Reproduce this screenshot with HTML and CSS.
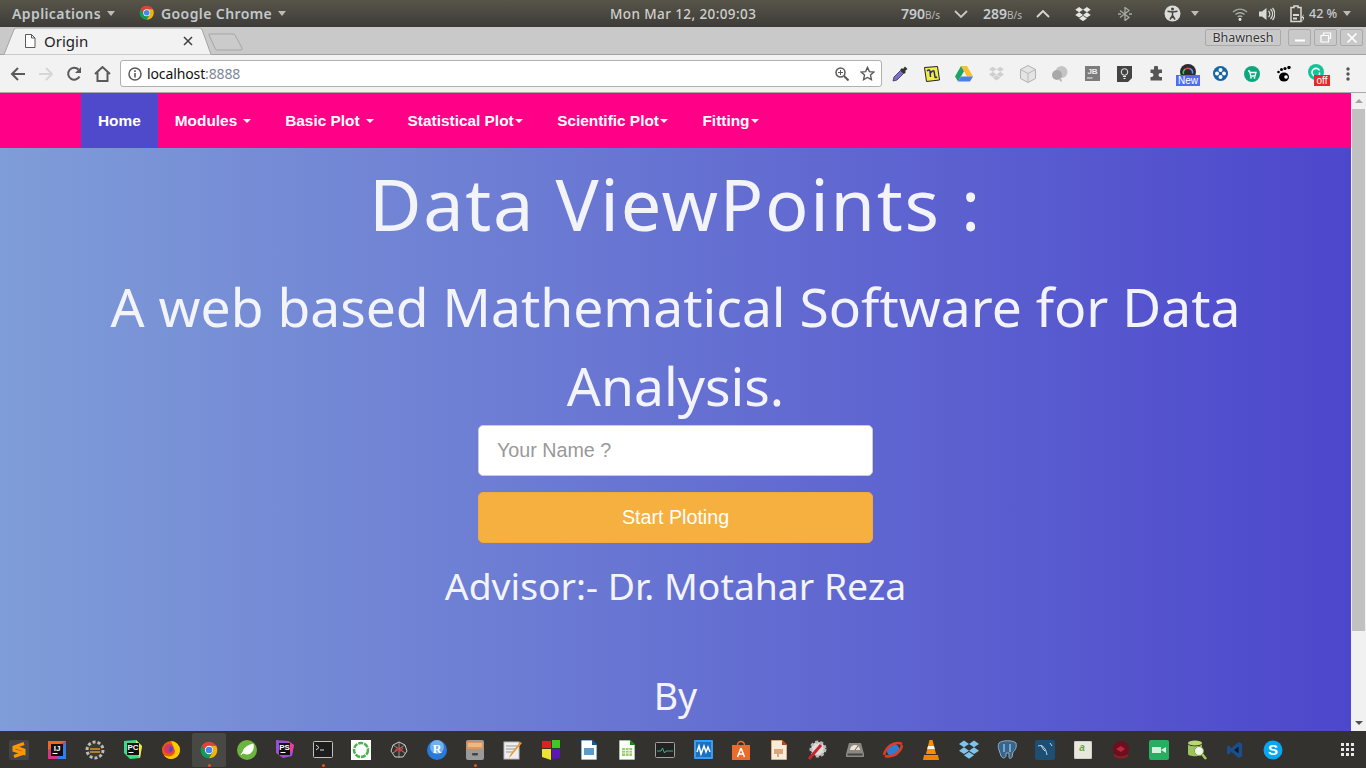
FILE: index.html
```html
<!DOCTYPE html>
<html lang="en">
<head>
<meta charset="utf-8">
<title>Origin</title>
<link rel="stylesheet" href="styles.css">
</head>
<body>
<svg class="defs" width="0" height="0" aria-hidden="true"><defs>
<symbol id="chrome" viewBox="0 0 24 24"><path fill="#db4437" d="M3.34 7A10 10 0 0 1 20.66 7H12A5 5 0 0 0 7.67 14.5Z"/><path fill="#0f9d58" d="M3.34 7L7.67 14.5A5 5 0 0 0 16.33 14.5L12 22A10 10 0 0 1 3.34 7Z"/><path fill="#f4b400" d="M12 22L16.33 14.5A5 5 0 0 0 12 7H20.66A10 10 0 0 1 12 22Z"/><circle cx="12" cy="12" r="5" fill="#fff"/><circle cx="12" cy="12" r="4" fill="#4285f4"/></symbol>
<symbol id="dropbox" viewBox="2 3 20 18"><path d="M7 3l5 3.400-5 3.400L2 6.400zM17 3l5 3.400-5 3.400-5-3.400zM2 13.200l5-3.400 5 3.400-5 3.400zM22 13.200l-5-3.400-5 3.400 5 3.400zM7 17.800l5-3.400 5 3.400-5 3.400z"/></symbol>
</defs></svg>
<div class="screen">
  <header class="panel">
    <div class="panel-left">
      <span class="panel-text apps">Applications</span><span class="caret"></span>
      <svg class="panel-chrome" width="17" height="17" viewBox="1 1 22 22"><use href="#chrome"/></svg>
      <span class="panel-text">Google Chrome</span><span class="caret"></span>
    </div>
    <div class="panel-clock">Mon Mar 12, 20:09:03</div>
    <div class="panel-right">
      <span class="net"><b>790</b><small>B/s</small></span>
      <svg class="chev1" width="14" height="8" viewBox="0 0 14 8"><path d="M1 1l6 6 6-6" fill="none" stroke="#c8c8c4" stroke-width="1.800"/></svg>
      <span class="net net2"><b>289</b><small>B/s</small></span>
      <svg class="chev2" width="14" height="8" viewBox="0 0 14 8"><path d="M1 7l6-6 6 6" fill="none" stroke="#d8d8d4" stroke-width="1.800"/></svg>
      <svg class="tray-drop" width="16" height="14" fill="#e6e6e2"><use href="#dropbox"/></svg>
      <svg class="tray-bt" width="16" height="14" viewBox="0 0 16 14"><path d="M3 3.500l9 7-4 3V.500l4 3-9 7M1 7h3M12 7h3" fill="none" stroke="#a8a8a2" stroke-width="1.300"/></svg>
      <svg class="tray-acc" width="17" height="17" viewBox="0 0 17 17"><circle cx="8.500" cy="8.500" r="8" fill="#dcdcd8"/><circle cx="8.500" cy="4" r="1.500" fill="#45433f"/><path d="M3.500 6.200l5 .8 5-.8M8.500 7v3.500M8.500 10.500l-2.500 4M8.500 10.500l2.500 4" stroke="#45433f" stroke-width="1.500" fill="none"/></svg>
      <span class="caret caret-acc"></span>
      <svg class="tray-wifi" width="16" height="14" viewBox="0 0 16 14"><path d="M1 5a10 10 0 0 1 14 0M3.500 7.500a6.500 6.500 0 0 1 9 0M5.800 10a3 3 0 0 1 4.400 0" fill="none" stroke="#a9a9a5" stroke-width="1.400"/><circle cx="8" cy="12.500" r="1.400" fill="#eee"/></svg>
      <svg class="tray-vol" width="16" height="14" viewBox="0 0 16 14"><path d="M0 4.500h3L7.500 1v12L3 9.500H0z" fill="#d8d8d4"/><path d="M9.500 4a4 4 0 0 1 0 6M11.500 2a7 7 0 0 1 0 10M13.500 1a9 9 0 0 1 0 12" fill="none" stroke="#d8d8d4" stroke-width="1.200"/></svg>
      <svg class="tray-bat" width="14" height="18" viewBox="0 0 14 18"><path d="M4 2.500V1h4v1.500h3v14H1v-14z" fill="none" stroke="#d8d8d4" stroke-width="1.500"/><path d="M3 9h6v2H3zM3 12.500h4v2H3z" fill="#d8d8d4"/><path d="M14 9l-3 4h2l-1 4 3-5h-2z" fill="#d8d8d4"/></svg>
      <span class="pct">42 %</span><span class="caret caret-pct"></span>
    </div>
  </header>

  <div class="tabstrip">
    <div class="tab">
      <svg class="tab-shape" width="210" height="28" viewBox="0 0 210 28"><path d="M0 27.500h3L13 2.500Q14 1 16 1h182q2 0 3 1.500L210 27.500" fill="#f2f2f2" stroke="#a3a3a3"/></svg>
      <svg class="tab-doc" width="12" height="14" viewBox="0 0 12 14"><path d="M1.500.500h6l3.500 3.500v9.500h-9.500zM7.500.500v3.500H11" fill="#fff" stroke="#5a5a5a"/></svg>
      <span class="tab-title">Origin</span>
      <svg class="tab-close" width="10" height="10" viewBox="0 0 10 10"><path d="M1 1l8 8M9 1l-8 8" stroke="#444" stroke-width="1.600"/></svg>
    </div>
    <svg class="newtab" width="36" height="18" viewBox="0 0 36 18"><path d="M1 1h24q1.500 0 2 1l7 13q.5 2-1 2H9q-1 0-1.500-1L1 2z" fill="#cbcbcb" stroke="#a5a5a5"/></svg>
    <div class="winbtns">
      <span class="user">Bhawnesh</span>
      <span class="winbtn"><svg width="12" height="12" viewBox="0 0 12 12"><path d="M1 8.500h10" stroke="#fff" stroke-width="2"/></svg></span>
      <span class="winbtn"><svg width="12" height="12" viewBox="0 0 12 12"><path d="M3.500 3V1h7v5.500h-2M1 3.500h7.500V10H1z" fill="none" stroke="#fff" stroke-width="1.200"/></svg></span>
      <span class="winbtn"><svg width="12" height="12" viewBox="0 0 12 12"><path d="M1.500 1.500l9 9M10.500 1.500l-9 9" stroke="#fff" stroke-width="1.600"/></svg></span>
    </div>
  </div>

  <div class="toolbar">
    <span class="navbtn"><svg width="16" height="16" viewBox="0 0 16 16"><path d="M15 8H2M8 2L2 8l6 6" fill="none" stroke="#5a5a5a" stroke-width="2"/></svg></span>
    <span class="navbtn"><svg width="16" height="16" viewBox="0 0 16 16"><path d="M1 8h13M8 2l6 6-6 6" fill="none" stroke="#d6d6d6" stroke-width="2"/></svg></span>
    <span class="navbtn"><svg width="16" height="16" viewBox="0 0 16 16"><path d="M13.500 10.500A6 6 0 1 1 12.500 3.500" fill="none" stroke="#5a5a5a" stroke-width="2"/><path d="M15 1v6H9z" fill="#5a5a5a"/></svg></span>
    <span class="navbtn"><svg width="17" height="16" viewBox="0 0 17 16"><path d="M1 8l7.500-7L16 8M3.500 6.500V15h10V6.500" fill="none" stroke="#5a5a5a" stroke-width="2"/></svg></span>
    <div class="omnibox">
      <svg class="info" width="14" height="14" viewBox="0 0 14 14"><circle cx="7" cy="7" r="6" fill="none" stroke="#5a5a5a" stroke-width="1.500"/><path d="M7 6v4.500M7 3.200v1.800" stroke="#5a5a5a" stroke-width="1.600"/></svg>
      <span class="url">localhost<span class="port">:8888</span></span>
      <svg class="zoomi" width="14" height="14" viewBox="0 0 14 14"><circle cx="5.500" cy="5.500" r="4.500" fill="none" stroke="#5a5a5a" stroke-width="1.500"/><path d="M9 9l4.500 4.500" stroke="#5a5a5a" stroke-width="2"/><path d="M3 5.500h5M5.500 3v5" stroke="#5a5a5a"/></svg>
      <svg class="star" width="15" height="15" viewBox="0 0 16 16"><path d="M8 1.500l2 4.500 4.800.5-3.600 3.200 1 4.800L8 12.200l-4.200 2.300 1-4.800-3.600-3.200L6 6z" fill="none" stroke="#5a5a5a" stroke-width="1.500"/></svg>
    </div>
    <div class="exts">
      <span class="ext"><svg width="18" height="18" viewBox="0 0 18 18"><path d="M2 16l1-4 6.500-6.500 3 3L6 15z" fill="#7a70c8" stroke="#4a4a70"/><path d="M9 5l2-2 1 1 2-2.500 2.500 2.500L14 6l1 1-2 2z" fill="#333"/></svg></span>
      <span class="ext"><svg width="16" height="16" viewBox="0 0 16 16"><path d="M.5 1.500L13.500.5l2 13.500-13 1.500z" fill="#f2ee3a" stroke="#222"/><path d="M3 5q2-2 3 0l.5 6M6.500 7q2-3 3.500-2l1 6q0 1 2 0" fill="none" stroke="#2a2a8c" stroke-width="1.500"/></svg></span>
      <span class="ext"><svg width="18" height="16" viewBox="0 0 18 16"><path d="M6 0h6l6 10.500h-6z" fill="#fbc02d"/><path d="M6 0l3 5.200L3 15.500 0 10.500z" fill="#1fa463"/><path d="M6 10.500h12l-3 5H3z" fill="#4a7fe8"/></svg></span>
      <span class="ext"><svg width="15" height="15" fill="#cfcfcf"><use href="#dropbox"/></svg></span>
      <span class="ext"><svg width="16" height="18" viewBox="0 0 16 18"><path d="M8 .500l7.500 4v9L8 17.500.500 13.500v-9z" fill="#e4e4e4" stroke="#b0b0b0"/><path d="M.500 4.500L8 8.500l7.500-4M8 8.500v9" fill="none" stroke="#b8b8b8"/></svg></span>
      <span class="ext"><svg width="16" height="16" viewBox="0 0 16 16"><circle cx="9.500" cy="6" r="6" fill="#c4c4c4"/><circle cx="5" cy="9" r="5" fill="#a8a8a8"/><path d="M9 12l1 4-3-2z" fill="#b0b0b0"/></svg></span>
      <span class="ext"><svg width="15" height="15" viewBox="0 0 15 15"><rect width="15" height="15" fill="#7c7c7c"/><text x="7.500" y="8" class="ext-jb">JB</text><path d="M2 12h5.500" stroke="#ddd" stroke-width="1.200"/></svg></span>
      <span class="ext"><svg width="15" height="16" viewBox="0 0 15 16"><path d="M0 0h15v12l-4 4H0z" fill="#444"/><circle cx="7.500" cy="6" r="3.300" fill="none" stroke="#eee"/><path d="M6 10.500h3M6.500 12.500h2" stroke="#eee"/></svg></span>
      <span class="ext"><svg width="15" height="15" viewBox="0 0 15 15"><path d="M5 1.500a2 2 0 0 1 4 0V3.500h4v3.500h-1.500a2 2 0 0 0 0 4H13v3.500H1.500V11h1a2 2 0 0 0 0-4h-1V3.500H5z" fill="#555"/></svg></span>
      <span class="ext ext-badged"><svg width="16" height="16" viewBox="0 0 16 16"><circle cx="8" cy="8" r="8" fill="#2c2c2c"/><path d="M3.500 10a4.500 4.500 0 0 1 2-5" fill="none" stroke="#3c6" stroke-width="1.500"/><path d="M5.500 5a4.500 4.500 0 0 1 4-.5" fill="none" stroke="#e44" stroke-width="1.500"/><path d="M9.500 4.500a4.500 4.500 0 0 1 3 5" fill="none" stroke="#4af" stroke-width="1.500"/></svg><span class="badge badge-new">New</span></span>
      <span class="ext"><svg width="15" height="15" viewBox="0 0 15 15"><circle cx="7.500" cy="7.500" r="7.500" fill="#1565a5"/><circle cx="7.500" cy="4" r="2" fill="#fff"/><circle cx="7.500" cy="11" r="2" fill="#fff"/><circle cx="4" cy="7.500" r="2" fill="#fff"/><circle cx="11" cy="7.500" r="2" fill="#fff"/></svg></span>
      <span class="ext"><svg width="16" height="16" viewBox="0 0 16 16"><circle cx="8" cy="8" r="8" fill="#0ca77d"/><path d="M4 5h1.500l1.200 5h4.300l1-3.500H6" fill="none" stroke="#fff" stroke-width="1.300"/><circle cx="7" cy="11.800" r=".9" fill="#fff"/><circle cx="10.500" cy="11.800" r=".9" fill="#fff"/></svg></span>
      <span class="ext"><svg width="14" height="16" viewBox="0 0 14 16"><ellipse cx="7" cy="11" rx="5" ry="4.500"/><circle cx="1.500" cy="6" r="1.300"/><circle cx="4.500" cy="3.500" r="1.500"/><circle cx="8" cy="2.500" r="1.600"/><circle cx="12" cy="1.500" r="1.700"/><circle cx="9" cy="11" r="1.800" fill="#fff"/></svg></span>
      <span class="ext ext-badged"><svg width="16" height="16" viewBox="0 0 16 16"><circle cx="8" cy="8" r="8" fill="#15c39a"/><path d="M11.500 6.500A4 4 0 1 0 11 11M11.500 8.500v3" fill="none" stroke="#fff" stroke-width="1.500"/></svg><span class="badge badge-off">off</span></span>
      <span class="ext"><svg width="4" height="14" viewBox="0 0 4 14" fill="#555"><circle cx="2" cy="2" r="1.700"/><circle cx="2" cy="7" r="1.700"/><circle cx="2" cy="12" r="1.700"/></svg></span>
    </div>
  </div>

  <div class="viewport">
    <main class="page">
      <nav class="nav">
        <a class="nav-item active">Home</a>
        <a class="nav-item">Modules<span class="nav-caret spaced"></span></a>
        <a class="nav-item">Basic Plot<span class="nav-caret spaced"></span></a>
        <a class="nav-item">Statistical Plot<span class="nav-caret"></span></a>
        <a class="nav-item">Scientific Plot<span class="nav-caret"></span></a>
        <a class="nav-item">Fitting<span class="nav-caret"></span></a>
      </nav>
      <section class="hero">
        <h1 class="title">Data ViewPoints :</h1>
        <h2 class="subtitle">A web based Mathematical Software for Data Analysis.</h2>
        <form class="start-form">
          <input class="name-input" type="text" placeholder="Your Name ?">
          <button class="start-btn" type="button">Start Ploting</button>
        </form>
        <p class="advisor">Advisor:- Dr. Motahar Reza</p>
        <p class="by">By</p>
      </section>
    </main>
    <aside class="scrollbar">
      <span class="arrow-up"></span>
      <span class="thumb"></span>
      <span class="arrow-down"></span>
    </aside>
  </div>

  <footer class="dock">
    <span class="app"><svg width="20" height="20" viewBox="0 0 20 20"><rect width="20" height="20" rx="2" fill="#444"/><path d="M15 3.500L5 7v3.500l10 3V10L5 6.500M5 16.500l10-3.500" fill="none" stroke="#ff9800" stroke-width="3"/></svg></span>
    <span class="app"><svg width="18" height="18" viewBox="0 0 18 18"><rect width="18" height="18" fill="#d5377f"/><path d="M0 9V0h18z" fill="#f26522"/><path d="M18 0v18H9z" fill="#2f80ed"/><rect x="3" y="3" width="12" height="12" fill="#111"/><text x="9" y="10" class="dk-t">IJ</text><path d="M4.500 12.500h5" stroke="#fff"/></svg></span>
    <span class="app"><svg width="20" height="20" viewBox="0 0 20 20"><circle cx="10" cy="10" r="8" fill="#3c3a30" stroke="#bbb" stroke-width="3" stroke-dasharray="3 2"/><path d="M5 9h10M5 12h10" stroke="#b57f2a" stroke-width="1.800"/></svg></span>
    <span class="app"><svg width="18" height="19" viewBox="0 0 18 19"><path d="M0 1l12-1 6 6-2 12-10 1-6-6z" fill="#3ddc84"/><path d="M12 0l6 6-2 12-4-6z" fill="#f5e642"/><rect x="3" y="3" width="12" height="12" fill="#111"/><text x="9" y="10" class="dk-t">PC</text><path d="M4.500 12.500h5" stroke="#fff"/></svg></span>
    <span class="app"><svg width="20" height="20" viewBox="0 0 20 20"><circle cx="10" cy="10" r="9" fill="#e66000"/><path d="M10 1a9 9 0 0 1 9 9c0 5-4 9-9 9-3 0-6-2-7-4 3 2 8 2 10-1 2-2 1-5-1-6 0-3-1-5-2-7z" fill="#ffcb00"/><circle cx="8" cy="9" r="5" fill="#d6356b"/><path d="M9 6l3 2-1 3-3 1z" fill="#3b50c5"/></svg></span>
    <span class="app app-active"><svg width="20" height="20"><use href="#chrome"/></svg><i class="run-dot"></i></span>
    <span class="app"><svg width="20" height="20" viewBox="0 0 20 20"><circle cx="10" cy="10" r="10" fill="#6cb33f"/><path d="M16 4c1 5-1 10-6 10-2 0-3-1-4-1 0-4 3-7 10-9zM4 15c2-4 5-6 8-7" fill="#fff" stroke="#fff"/></svg></span>
    <span class="app"><svg width="20" height="19" viewBox="0 0 20 19"><path d="M1 0l12 1 6 4-2 11-9 2-7-5z" fill="#9b4fd8"/><path d="M13 1l6 4-2 9-4-6z" fill="#e83ea0"/><rect x="4" y="3" width="11" height="12" fill="#111"/><text x="9.500" y="9.500" class="dk-t">PS</text><path d="M5.500 12.500h5" stroke="#fff"/></svg></span>
    <span class="app"><svg width="20" height="17" viewBox="0 0 20 17"><rect x=".5" y=".5" width="19" height="16" rx="1" fill="#1d1d1d" stroke="#c0c0c0"/><path d="M3 4l3 2.500L3 9M7 9h4" fill="none" stroke="#ddd"/></svg><i class="run-dot"></i></span>
    <span class="app"><svg width="20" height="20" viewBox="0 0 20 20"><rect width="20" height="20" fill="#fff"/><circle cx="10" cy="10" r="7" fill="none" stroke="#4caf50" stroke-width="2.500" stroke-dasharray="5 1"/></svg></span>
    <span class="app"><svg width="18" height="18" viewBox="0 0 18 18"><path d="M9 1l6 3 2 6-4 6H5L1 10l2-6z" fill="none" stroke="#ccc"/><path d="M3 4l12 8M15 4L3 12M9 1v16" stroke="#bbb" stroke-width=".7"/><path d="M5 10l3-3 2 3 3-3" fill="none" stroke="#d33" stroke-width="1.500"/></svg></span>
    <span class="app"><svg width="20" height="20" viewBox="0 0 20 20"><circle cx="10" cy="10" r="10" fill="#2979d8"/><circle cx="10" cy="7" r="7" fill="#6fb0ee"/><text x="10" y="13" class="dk-r">R</text></svg></span>
    <span class="app"><svg width="18" height="20" viewBox="0 0 18 20"><rect width="18" height="20" rx="2" fill="#9a9a9a"/><rect x="1" y="2" width="16" height="7" fill="#e2975a"/><path d="M2 4h14M2 6h14" stroke="#f4d7b3"/><rect x="6" y="13" width="6" height="2.500" rx="1" fill="#444"/></svg><i class="run-dot"></i></span>
    <span class="app"><svg width="20" height="20" viewBox="0 0 20 20"><rect x="1" y="2" width="15" height="17" fill="#eee" stroke="#bbb"/><path d="M3 6h11M3 9h9M3 12h8" stroke="#999"/><path d="M19 3L8 16l-2 2 1-3L17 2z" fill="#e99a35"/></svg></span>
    <span class="app"><svg width="18" height="20" viewBox="0 0 18 20"><path d="M0 1h9v7H0z" fill="#e0201a"/><path d="M10 0h8v8h-8z" fill="#40c820"/><path d="M0 9h9v11l-9-3z" fill="#eee332"/><path d="M10 9h8v9l-8 1z" fill="#5c16b8"/></svg></span>
    <span class="app"><svg width="16" height="20" viewBox="0 0 16 20"><path d="M0 0h11l5 5v15H0z" fill="#fff" stroke="#2a6aa0"/><path d="M11 0l5 5h-5z" fill="#125d92"/><rect x="3" y="8" width="10" height="7" fill="#5a9bcc"/></svg></span>
    <span class="app"><svg width="16" height="20" viewBox="0 0 16 20"><path d="M0 0h11l5 5v15H0z" fill="#fff" stroke="#38903a"/><path d="M11 0l5 5h-5z" fill="#18870e"/><path d="M3 8h10v8H3z" fill="#9ccc65"/><path d="M3 10.500h10M3 13h10M6.500 8v8M10 8v8" stroke="#fff" stroke-width=".7"/></svg></span>
    <span class="app"><svg width="20" height="16" viewBox="0 0 20 16"><rect x=".5" y=".5" width="19" height="15" rx="1" fill="#222" stroke="#a0a0a0"/><path d="M2 9h4l1.500-3 2 5 1.500-2h7" fill="none" stroke="#3cb08a"/></svg></span>
    <span class="app"><svg width="19" height="19" viewBox="0 0 19 19"><rect width="19" height="19" rx="1" fill="#3a9df0"/><rect x="2" y="2" width="15" height="15" fill="#1a6fc0"/><path d="M3 12l2-6 2 8 3-8 2 6 2-5 2 5" fill="none" stroke="#fff" stroke-width="1.500"/></svg></span>
    <span class="app"><svg width="18" height="20" viewBox="0 0 18 20"><path d="M0 5h18v15H0z" fill="#ea6b2d"/><path d="M5.500 5a3.500 3.500 0 0 1 7 0" fill="none" stroke="#ea6b2d" stroke-width="1.500"/><path d="M9 8l-3.500 9M9 8l3.500 9M7 14h4" stroke="#fff" stroke-width="1.500" fill="none"/></svg></span>
    <span class="app"><svg width="16" height="20" viewBox="0 0 16 20"><path d="M0 0h11l5 5v15H0z" fill="#f9ecd9" stroke="#b5683a"/><path d="M11 0l5 5h-5z" fill="#b5451a"/><rect x="3" y="9" width="9" height="5" fill="#e3a37a"/><path d="M7 14v3" stroke="#777"/></svg></span>
    <span class="app"><svg width="20" height="20" viewBox="0 0 20 20"><circle cx="11" cy="9" r="7" fill="#ddd" stroke="#bbb" stroke-width="3" stroke-dasharray="3 2"/><path d="M2 19L14 5" stroke="#c9252b" stroke-width="3"/></svg></span>
    <span class="app"><svg width="18" height="14" viewBox="0 0 18 14"><path d="M3 0h12l3 11v3H0v-3z" fill="#8a8a82"/><path d="M4 7a5 5 0 0 1 10 0z" fill="#e8e8da"/><path d="M9 7l3-4" stroke="#c33"/><rect x="1.500" y="10.500" width="15" height="2" fill="#444"/></svg></span>
    <span class="app"><svg width="20" height="18" viewBox="0 0 20 18"><circle cx="10" cy="9" r="6.500" fill="#2e7dd1"/><path d="M1 14C3 5 12 0 19 3" fill="none" stroke="#e53a1e" stroke-width="2.500"/><path d="M19 4c-1 8-10 13-17 11" fill="none" stroke="#e53a1e" stroke-width="2.500"/></svg></span>
    <span class="app"><svg width="16" height="20" viewBox="0 0 16 20"><path d="M6.500 0h3L13 14H3z" fill="#ff8c00"/><path d="M5 6h6l.8 3H4.200z" fill="#f4f4f4"/><path d="M1 15h14l1 5H0z" fill="#f28500"/></svg></span>
    <span class="app"><svg width="20" height="19" fill="#7cc4f0"><use href="#dropbox"/></svg></span>
    <span class="app"><svg width="20" height="20" viewBox="0 0 20 20"><path d="M2 3c3-3 14-3 17 0 1 4-1 8-3 9l-1 5c-1 2-3 2-3 0V13H9v3c-1 3-4 2-5 0L2 10c-1-2-1-5 0-7z" fill="#336791" stroke="#9ab"/><path d="M7 4v8M13 4v8" stroke="#cde"/></svg></span>
    <span class="app"><svg width="20" height="20" viewBox="0 0 20 20"><rect width="20" height="20" rx="2" fill="#1d4e74"/><path d="M3 6c5-2 8 3 9 9M6 5l2 4 2 2M15 3l2 3" fill="none" stroke="#c9d7e2"/></svg></span>
    <span class="app"><svg width="18" height="18" viewBox="0 0 18 18"><rect width="18" height="18" rx="2" fill="#e8e8de" stroke="#bbb"/><text x="8" y="10" class="dk-a">a</text></svg></span>
    <span class="app"><svg width="20" height="20" viewBox="0 0 20 20"><circle cx="10" cy="9" r="8" fill="#6e0e1e"/><path d="M5 9l5-3 4 3-4 3z" fill="#b52a3c"/><path d="M3 15c3 3 11 3 14 0" fill="none" stroke="#822" stroke-width="2"/></svg></span>
    <span class="app"><svg width="20" height="20" viewBox="0 0 20 20"><rect width="20" height="20" rx="2" fill="#27ae60"/><rect x="3" y="7" width="9" height="6" fill="#d6f0de"/><path d="M12 10l5-3v6z" fill="#d6f0de"/></svg></span>
    <span class="app"><svg width="20" height="20" viewBox="0 0 20 20"><ellipse cx="8" cy="3" rx="7" ry="2.500" fill="#b7d77a"/><path d="M1 4v10c0 3 14 3 14 0V4c0 3-14 3-14 0z" fill="#9cc45c"/><circle cx="12" cy="11" r="4.500" fill="#f4f4ee" stroke="#7da83f"/><path d="M15 14l4 5" stroke="#a5cd5d" stroke-width="2.500"/></svg></span>
    <span class="app"><svg width="16" height="18" viewBox="0 0 18 18"><path d="M13 0l4 2v14l-4 2-8-7-3 3-2-1V5l2-1 3 3z" fill="#1a4f8e"/><path d="M13 5L8 9l5 4z" fill="#141a24"/></svg></span>
    <span class="app"><svg width="20" height="20" viewBox="0 0 20 20"><circle cx="10" cy="10" r="9.500" fill="#08a8f0"/><text x="10" y="15" class="dk-s">S</text></svg></span>
    <span class="dock-spacer"></span>
    <span class="grid-btn"><i></i><i></i><i></i><i></i><i></i><i></i><i></i><i></i><i></i></span>
  </footer>
</div>
</body>
</html>
```
FILE: styles.css
```css
* { box-sizing: border-box; }
html, body { margin: 0; padding: 0; height: 100%; overflow: hidden; }
body { font-family: "Liberation Sans", Arial, sans-serif; }
.defs { display: block; height: 0; }
.screen { width: 1366px; height: 768px; display: flex; flex-direction: column; overflow: hidden; }
svg { display: block; flex: none; }

/* top panel */
.panel { height: 27px; flex: none; display: flex; align-items: center; position: relative; background: linear-gradient(#575449, #3e3c38); color: #c3c8cc; font-family: "Noto Sans", sans-serif; font-size: 14px; }
.panel-left { display: flex; align-items: center; padding-left: 12px; }
.panel-text { font-weight: 600; letter-spacing: .4px; }
.caret { width: 0; height: 0; border-left: 4.500px solid transparent; border-right: 4.500px solid transparent; border-top: 5px solid #bdbdb8; margin-left: 6px; }
.panel-chrome { margin-left: 24px; margin-right: 5px; }
.panel-clock { position: absolute; left: 610px; top: 5px; color: #cfd0cc; font-size: 13.500px; letter-spacing: .4px; font-weight: 500; }
.panel-right { margin-left: auto; display: flex; align-items: center; padding-right: 15px; }
.net { display: flex; align-items: baseline; width: 50px; color: #c8ccd0; font-size: 14px; }
.net b { font-weight: 600; }
.net small { font-size: 10px; color: #bbb; }
.chev1 { margin-left: 3px; }
.net2 { margin-left: 15px; }
.chev2 { margin-left: 3px; }
.tray-drop { margin-left: 25px; }
.tray-bt { margin-left: 26px; }
.tray-acc { margin-left: 31px; }
.caret-acc { margin-left: 10px; }
.tray-wifi { margin-left: 33px; }
.tray-vol { margin-left: 11px; }
.tray-bat { margin-left: 15px; }
.pct { margin-left: 5px; font-size: 12.500px; font-weight: 500; width: 29px; white-space: nowrap; color: #c8ccd0; }
.caret-pct { margin-left: 5px; }

/* tabs */
.tabstrip { height: 28px; flex: none; display: flex; align-items: flex-start; background: #c9c9c9; border-bottom: 1px solid #a3a3a3; }
.tab { position: relative; width: 210px; height: 28px; margin-left: 1px; display: flex; align-items: center; }
.tab-shape { position: absolute; left: 0; top: 0; }
.tab-doc { position: relative; margin-left: 23px; }
.tab-title { position: relative; margin-left: 8px; font-family: "Noto Sans", sans-serif; font-size: 15px; color: #222; }
.tab-close { position: relative; margin-left: auto; margin-right: 18px; }
.newtab { margin: 6px 0 0 -3px; }
.winbtns { margin-left: auto; display: flex; gap: 3px; padding: 2px 3px 0 0; }
.user { width: 76px; height: 17px; margin-right: 4px; border: 1px solid #aaa; border-radius: 2px; color: #333; font-family: "Noto Sans", sans-serif; font-size: 12.500px; line-height: 15px; text-align: center; text-shadow: 0 0 2px #fff; }
.winbtn { width: 23px; height: 17px; border: 1px solid #aaa; border-radius: 2px; display: flex; align-items: center; justify-content: center; }

/* toolbar */
.toolbar { height: 38px; flex: none; display: flex; align-items: center; padding-left: 4px; background: #f2f2f2; border-bottom: 1px solid #a8a8a8; }
.navbtn { width: 28px; display: flex; justify-content: center; }
.omnibox { width: 762px; height: 27px; margin-left: 4px; padding: 0 6px 0 7px; display: flex; align-items: center; background: #fff; border: 1px solid #b0b0b0; border-radius: 3px; }
.url { margin-left: 5px; font-family: "Noto Sans", sans-serif; font-size: 14px; color: #111; letter-spacing: -.12px; }
.port { color: #7d8796; }
.zoomi { margin-left: auto; }
.star { margin-left: 11px; }
.exts { display: flex; margin-left: 2px; }
.ext { position: relative; width: 32px; height: 24px; display: flex; align-items: center; justify-content: center; }
.ext-jb { font: bold 8px "Liberation Sans", sans-serif; fill: #eee; text-anchor: middle; }
.ext-badged { align-items: flex-start; padding-top: 2px; }
.badge { position: absolute; left: 4px; top: 13px; width: 24px; height: 11px; color: #fff; font-size: 10px; line-height: 11px; text-align: center; }
.badge-new { background: #4f6ef0; }
.badge-off { left: 14px; width: 16px; background: #e8282b; }

/* page */
.viewport { height: 638px; flex: none; display: flex; }
.page { flex: 1; min-width: 0; overflow: hidden; background: linear-gradient(to right, #7f9dd8, #4d47cc); }
.nav { height: 55px; display: flex; padding-left: 81px; background: #ff0087; }
.nav-item { display: flex; align-items: center; padding: 0 17px; color: #fff; font-size: 15.400px; font-weight: bold; white-space: nowrap; }
.nav-item.active { background: #4f4acb; }
.nav-caret { width: 0; height: 0; margin-left: 1.500px; border-left: 4.560px solid transparent; border-right: 4.560px solid transparent; border-top: 4.560px solid #fff; }
.nav-caret.spaced { margin-left: 6px; }
.hero { display: flex; flex-direction: column; align-items: center; text-align: center; color: #f3f3fa; font-family: "Noto Sans", sans-serif; font-weight: 400; }
.title { margin: 12px 0 22px; font-size: 72px; line-height: 86px; font-weight: 400; letter-spacing: 1.700px; }
.subtitle { margin: 0; width: 1200px; font-size: 53.400px; line-height: 78.500px; font-weight: 400; }
.start-form { width: 395px; display: flex; flex-direction: column; gap: 16px; }
.name-input { width: 100%; height: 51px; padding: 0 18px; background: #fff; border: 1px solid #ccc; border-radius: 5px; font: 19.700px "Liberation Sans", sans-serif; }
.name-input::placeholder { color: #999; opacity: 1; }
.start-btn { width: 100%; height: 51px; background: #f6b040; border: 1px solid #f0a93a; border-radius: 5px; color: #fff; font: 19.700px "Liberation Sans", sans-serif; }
.advisor { margin: 18px 0 0; font-size: 37.300px; line-height: 50px; }
.by { margin: 60px 0 0; font-size: 37.500px; line-height: 50px; }

/* scrollbar */
.scrollbar { width: 15px; flex: none; display: flex; flex-direction: column; align-items: center; background: #f1f1f1; }
.arrow-up { width: 0; height: 0; margin-top: 6px; border-left: 4px solid transparent; border-right: 4px solid transparent; border-bottom: 4px solid #a3a3a3; }
.thumb { width: 13px; height: 522px; margin-top: 6px; background: #c1c1c1; }
.arrow-down { width: 0; height: 0; margin-top: 90px; border-left: 4px solid transparent; border-right: 4px solid transparent; border-top: 4px solid #505050; }

/* dock */
.dock { height: 37px; flex: none; display: flex; align-items: center; background: #33322e; }
.app { position: relative; width: 38px; height: 34px; display: flex; align-items: center; justify-content: center; }
.app-active::before { content: ""; position: absolute; left: 2px; right: 2px; top: 0; bottom: 0; border-radius: 2px; background: #484845; }
.app svg { position: relative; }
.run-dot { position: absolute; left: 18px; bottom: 0; width: 3px; height: 3px; border-radius: 50%; background: #e9541d; }
.dk-t { font: bold 8px "Liberation Sans", sans-serif; fill: #fff; text-anchor: middle; }
.dk-r { font: bold 12px "Liberation Serif", serif; fill: #fff; text-anchor: middle; }
.dk-a { font: italic bold 10px "Liberation Sans", sans-serif; fill: #6aa53a; text-anchor: middle; }
.dk-s { font: bold 15px "Liberation Sans", sans-serif; fill: #fff; text-anchor: middle; }
.dock-spacer { flex: 1; }
.grid-btn { width: 13px; margin-right: 12px; display: grid; grid-template-columns: repeat(3, 3px); gap: 2px; }
.grid-btn i { width: 3px; height: 3px; background: #e8e8e8; }
```
